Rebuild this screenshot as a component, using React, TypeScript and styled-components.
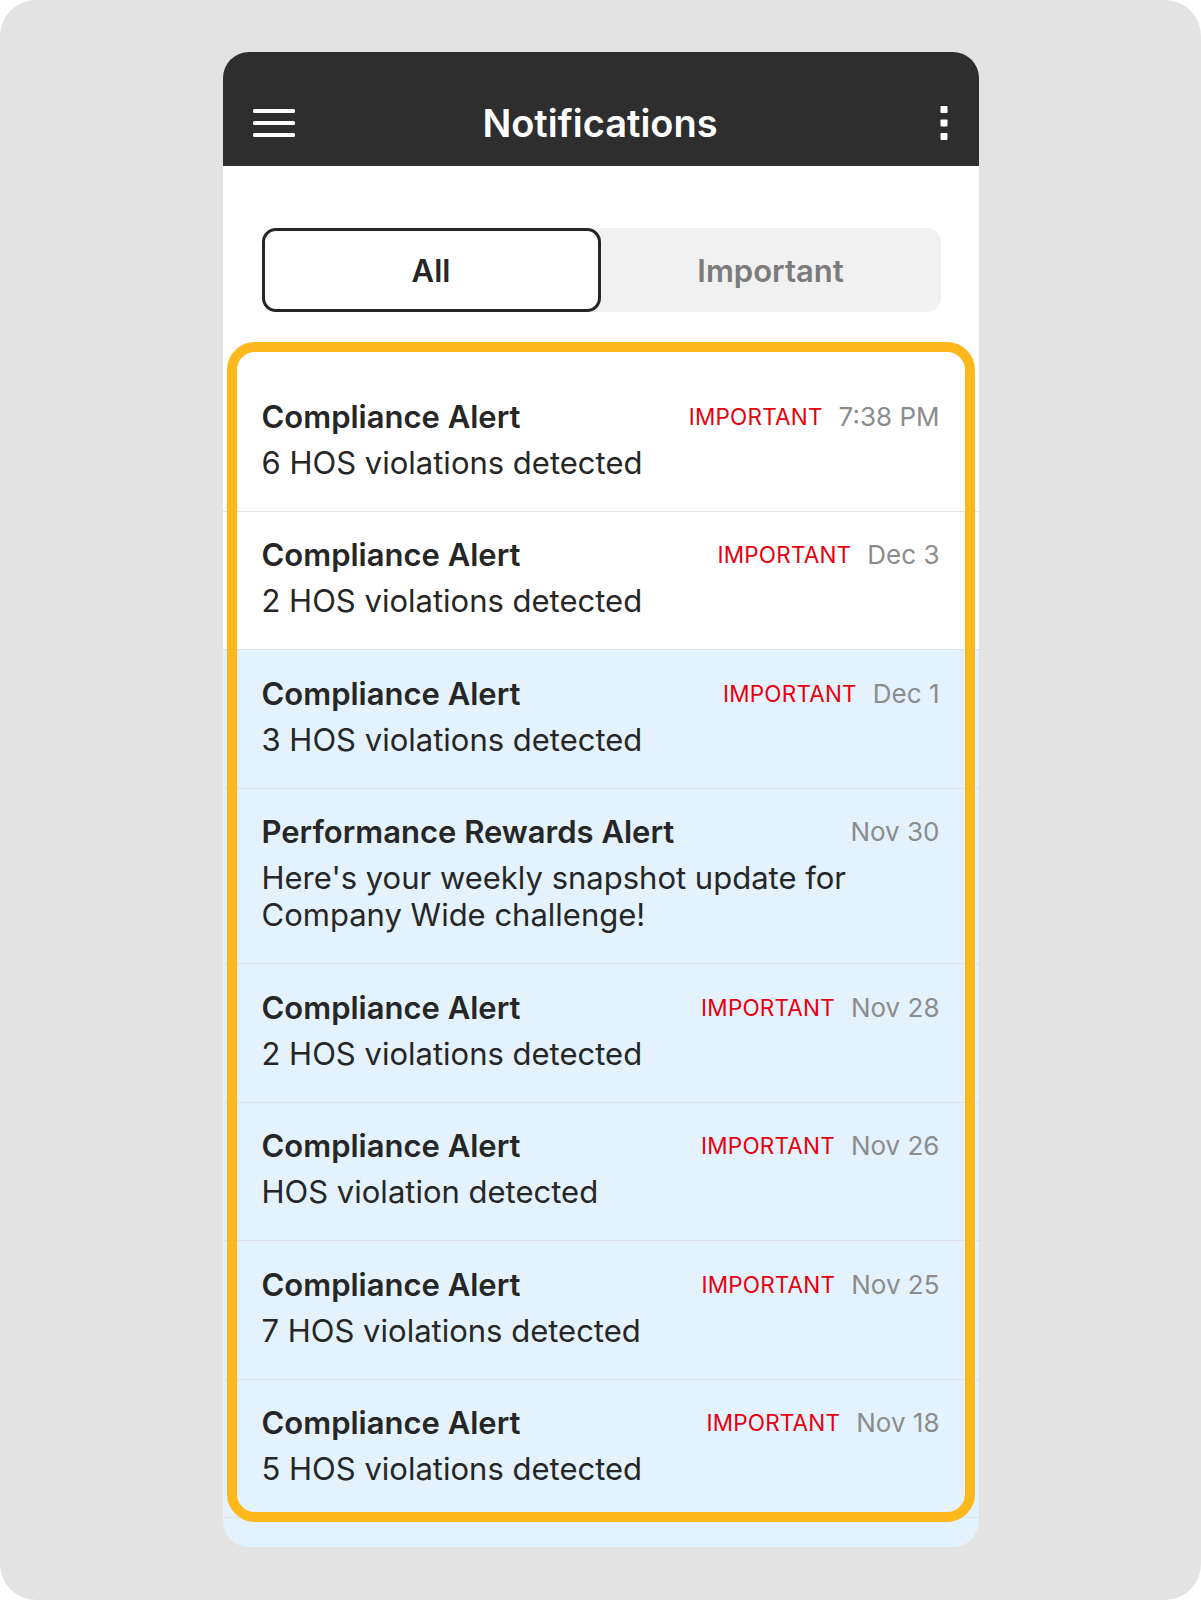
import React, { useState } from 'react';
import styled, { createGlobalStyle } from 'styled-components';

const GlobalStyle = createGlobalStyle`
    html, body {
        margin: 0;
        padding: 0;
        background: #ffffff;
    }

    body {
        font-family: Inter, 'Noto Sans', 'Liberation Sans', sans-serif;
        -webkit-font-smoothing: antialiased;
    }
`;

const Backdrop = styled.div`
    width: 1201px;
    height: 1600px;
    box-sizing: border-box;
    padding-top: 52px;
    background: #e3e3e3;
    border-radius: 36px;
    display: flex;
    justify-content: center;
    align-items: flex-start;
`;

const Phone = styled.div`
    position: relative;
    width: 756px;
    height: 1495px;
    background: #e3f2fd;
    border-radius: 26px;
    overflow: hidden;
    display: flex;
    flex-direction: column;

    > * {
        flex-shrink: 0;
    }
`;

const Header = styled.header`
    height: 114px;
    box-sizing: border-box;
    padding: 28px 31px 0 30px;
    background: #2e2e2e;
    display: grid;
    grid-template-columns: 1fr auto 1fr;
    align-items: center;
`;

const Title = styled.h1`
    margin: 0;
    color: #ffffff;
    font-size: 38px;
    font-weight: 600;
`;

const IconButton = styled.button<{ $align: 'start' | 'end' }>`
    justify-self: ${(p) => p.$align};
    display: flex;
    padding: 0;
    border: none;
    background: none;
    cursor: pointer;
`;

const Top = styled.div`
    background: #ffffff;
    padding: 62px 38px 61px 39px;
`;

const Segmented = styled.div`
    display: grid;
    grid-template-columns: 339px 1fr;
    height: 84px;
    background: #f1f1f1;
    border-radius: 14px;
`;

const Segment = styled.button<{ $active: boolean }>`
    border: ${(p) => (p.$active ? '3px solid #262626' : '3px solid transparent')};
    border-radius: 14px;
    background: ${(p) => (p.$active ? '#ffffff' : 'transparent')};
    color: ${(p) => (p.$active ? '#262626' : '#7b7b7b')};
    font-family: inherit;
    font-size: 31px;
    font-weight: 600;
    cursor: pointer;
`;

const List = styled.ul`
    margin: 0;
    padding: 0;
    list-style: none;
`;

const Row = styled.li<{ $unread: boolean }>`
    padding: 24.5px 39px 30px;
    background: ${(p) => (p.$unread ? '#e3f2fd' : '#ffffff')};
    border-bottom: 1px solid #dfe3e7;
    display: flex;
    flex-direction: column;
    gap: 9px;
`;

const RowHead = styled.div`
    display: flex;
    align-items: center;
    gap: 16px;
`;

const RowTitle = styled.div`
    flex: 1;
    color: #262626;
    font-size: 31px;
    font-weight: 600;
    line-height: 37px;
`;

const Badge = styled.span`
    color: #e6000e;
    font-size: 22.5px;
    letter-spacing: 0.2px;
`;

const Time = styled.span`
    color: #8c8c8c;
    font-size: 26px;
`;

const RowBody = styled.div`
    color: #262626;
    font-size: 31px;
    line-height: 37px;
    max-width: 600px;
`;

const Highlight = styled.div`
    position: absolute;
    left: 4.5px;
    right: 4px;
    top: 290px;
    bottom: 25px;
    border: 10px solid #fdb81e;
    border-radius: 28px;
    pointer-events: none;
`;

type Notice = {
    title: string;
    body: string;
    time: string;
    important: boolean;
    unread: boolean;
};

const notices: Notice[] = [
    { title: 'Compliance Alert', body: '6 HOS violations detected', time: '7:38 PM', important: true, unread: false },
    { title: 'Compliance Alert', body: '2 HOS violations detected', time: 'Dec 3', important: true, unread: false },
    { title: 'Compliance Alert', body: '3 HOS violations detected', time: 'Dec 1', important: true, unread: true },
    {
        title: 'Performance Rewards Alert',
        body: "Here's your weekly snapshot update for Company Wide challenge!",
        time: 'Nov 30',
        important: false,
        unread: true,
    },
    { title: 'Compliance Alert', body: '2 HOS violations detected', time: 'Nov 28', important: true, unread: true },
    { title: 'Compliance Alert', body: 'HOS violation detected', time: 'Nov 26', important: true, unread: true },
    { title: 'Compliance Alert', body: '7 HOS violations detected', time: 'Nov 25', important: true, unread: true },
    { title: 'Compliance Alert', body: '5 HOS violations detected', time: 'Nov 18', important: true, unread: true },
];

const MenuIcon = () => (
    <svg width="42" height="28" viewBox="0 0 42 28" fill="#ffffff">
        <rect x="0" y="0" width="42" height="4" rx="1.5" />
        <rect x="0" y="12" width="42" height="4" rx="1.5" />
        <rect x="0" y="24" width="42" height="4" rx="1.5" />
    </svg>
);

const MoreIcon = () => (
    <svg width="8" height="34" viewBox="0 0 8 34" fill="#ffffff">
        <rect x="0.5" y="0" width="7" height="7" rx="1" />
        <rect x="0.5" y="13.5" width="7" height="7" rx="1" />
        <rect x="0.5" y="27" width="7" height="7" rx="1" />
    </svg>
);

const App = (): JSX.Element => {
    const [tab, setTab] = useState<'all' | 'important'>('all');

    return (
        <>
            <GlobalStyle />
            <Backdrop>
                <Phone>
                    <Header>
                        <IconButton $align="start" aria-label="Menu">
                            <MenuIcon />
                        </IconButton>
                        <Title>Notifications</Title>
                        <IconButton $align="end" aria-label="More">
                            <MoreIcon />
                        </IconButton>
                    </Header>

                    <Top>
                        <Segmented>
                            <Segment $active={tab === 'all'} onClick={() => setTab('all')}>
                                All
                            </Segment>
                            <Segment $active={tab === 'important'} onClick={() => setTab('important')}>
                                Important
                            </Segment>
                        </Segmented>
                    </Top>

                    <List>
                        {notices.map((n, i) => (
                            <Row key={i} $unread={n.unread}>
                                <RowHead>
                                    <RowTitle>{n.title}</RowTitle>
                                    {n.important && <Badge>IMPORTANT</Badge>}
                                    <Time>{n.time}</Time>
                                </RowHead>
                                <RowBody>{n.body}</RowBody>
                            </Row>
                        ))}
                    </List>

                    {/* callout drawn over the list */}
                    <Highlight />
                </Phone>
            </Backdrop>
        </>
    );
};

export default App;
